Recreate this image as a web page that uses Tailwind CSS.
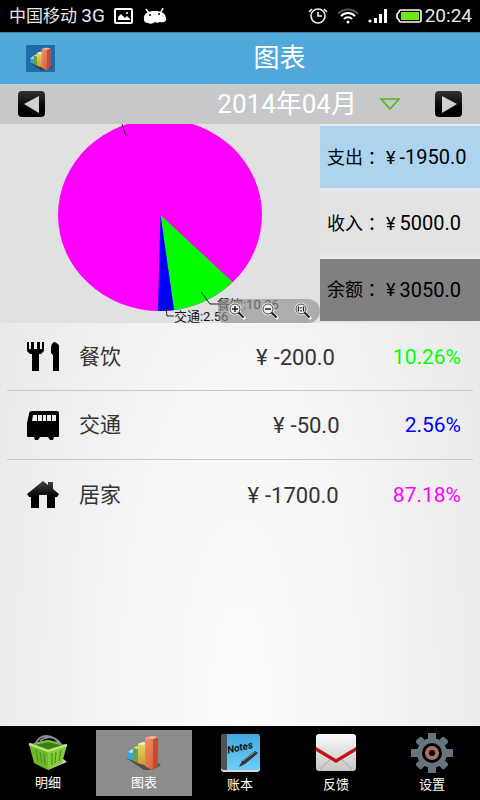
<!DOCTYPE html>
<html lang="zh-CN">
<head>
    <meta charset="UTF-8">
    <meta name="viewport" content="width=device-width, initial-scale=1.0">
    <title>图表</title>
    <script src="https://cdn.jsdelivr.net/npm/@tailwindcss/browser@4"></script>
</head>
<body class="min-h-screen flex flex-col bg-[radial-gradient(ellipse_at_50%_86%,#fdfdfd_0%,#f5f5f5_35%,#e4e4e4_100%)] font-['Roboto','Noto_Sans_CJK_SC',sans-serif]">
    <!-- Shared icons -->
    <svg class="absolute w-0 h-0">
        <linearGradient id="red" x2="1" y2="1"><stop stop-color="#f0936f"/><stop offset="1" stop-color="#d9532f"/></linearGradient>
        <linearGradient id="yellow" x2="0" y2="1"><stop stop-color="#e3df6a"/><stop offset="1" stop-color="#c79a2e"/></linearGradient>
        <symbol id="bars" viewBox="0 0 36 36">
            <path d="M0 23l18 12h8l9-5-6-4z" fill="#333" opacity=".7"/>
            <path d="M2 17l4-3 3 1v11l-7-2z" fill="#3aa6d6"/>
            <path d="M2 17l4-3 3 1-3 3z" fill="#a8e6fa"/>
            <path d="M7 13l4-2 4 1v17l-8-3z" fill="#6fa042"/>
            <path d="M7 13l4-2 4 1-4 2z" fill="#c4e29a"/>
            <path d="M12 9l5-2 4 1v23l-9-3z" fill="url(#yellow)"/>
            <path d="M12 9l5-2 4 1-4 2z" fill="#f5f2ae"/>
            <path d="M19 3l7-2 6 1v28l-6 5-7-4z" fill="url(#red)"/>
            <path d="M27 4l5-2v28l-5 5z" fill="#c64c2d"/>
            <path d="M19 3l7-2 6 1-5 2z" fill="#f6b49b"/>
        </symbol>
        <symbol id="lens" viewBox="0 0 18 18">
            <path d="M11 11l5 5" stroke="#fff" stroke-width="3" stroke-linecap="round"/>
            <circle cx="7" cy="7" r="6" fill="#f4f4f4" stroke="#eee" stroke-width="1"/>
            <circle cx="7" cy="7" r="5" fill="#f0f0f0" stroke="#444" stroke-width="1"/>
            <path d="M11 11l4 4" stroke="#222" stroke-width="2" stroke-linecap="round"/>
        </symbol>
    </svg>

    <!-- Status bar -->
    <div class="h-8 bg-black text-[#e8e8e8] flex items-center justify-between pl-[9px] pr-2">
        <div class="flex items-center gap-[9px]">
            <span class="text-[17px]">中国移动 <span class="text-[19px]">3G</span></span>
            <svg class="w-5 h-4" viewBox="0 0 20 16" fill="none">
                <rect x="1" y="1" width="17" height="14" rx="1" stroke="#fff" stroke-width="2"/>
                <path d="M4 12V9l3-3 4 4 2-2 3 3v1z" fill="#fff"/>
                <circle cx="13" cy="5" r="1" fill="#fff"/>
            </svg>
            <svg class="w-6 h-4" viewBox="0 0 24 16">
                <path d="M3 1l3 4M20 0l-2 4" stroke="#fff" stroke-width="1.500"/>
                <path d="M1 12C0 5 5 3 12 3s10 2 11 7c1 4-3 5-6 4-2 1-3 1-5 0-2 2-5 2-7 1-2 0-4-1-4-3z" fill="#fff"/>
                <circle cx="7" cy="7" r="1" fill="#000"/>
                <circle cx="16" cy="6" r="1" fill="#000"/>
            </svg>
        </div>
        <div class="flex items-center gap-2">
            <svg class="w-5 h-4" viewBox="0 0 20 16" fill="none" stroke="#f0f0f0" stroke-width="1.6">
                <circle cx="10" cy="8" r="7"/>
                <path d="M10 4v4h4M1 4l3-3M19 4l-3-3"/>
            </svg>
            <svg class="w-6 h-4" viewBox="0 0 24 16" fill="none" stroke="#fff" stroke-width="2">
                <path d="M2 5.500C8 0 16 0 22 5.500" stroke="#555"/>
                <path d="M5 8c4-4 10-4 14 0M8 11c2-2.500 6-2.500 8 0"/>
                <circle cx="12" cy="14" r="1.500" fill="#fff" stroke="none"/>
            </svg>
            <svg class="w-5 h-4" viewBox="0 0 20 16" fill="#fff">
                <circle cx="2" cy="13" r="1.600"/>
                <path d="M6 10h3v5H6zM11 6h3v9h-3zM16 1h3v14h-3z"/>
            </svg>
            <div class="flex items-center gap-[3px]">
                <svg class="w-[26px] h-4" viewBox="0 0 26 16">
                    <path d="M5 2h18q2 0 2 2v8q0 2-2 2H5q-2 0-2-2l-2-2V6l2-2q0-2 2-2z" fill="none" stroke="#fff" stroke-width="1.600"/>
                    <rect x="5" y="4" width="18" height="8" fill="#6fe51a"/>
                </svg>
                <span class="text-[19px]">20:24</span>
            </div>
        </div>
    </div>

    <!-- Header -->
    <header class="h-[52px] bg-[#50a9da] border-t border-[#3f84aa] flex items-center px-[26px]">
        <div class="w-[29px] h-[27px] bg-[#1f6cab] flex items-center justify-center">
            <svg class="w-6 h-6"><use href="#bars"/></svg>
        </div>
        <h1 class="flex-1 text-center text-[26px] pl-20 pr-[30px] text-white">图表</h1>
    </header>

    <!-- Month switcher -->
    <div class="h-10 bg-[#c7c8ca] flex items-center px-[18px]">
        <button aria-label="上个月" class="w-[27px] h-[26px] rounded-sm bg-linear-to-b from-[#333] to-black flex items-center justify-center">
            <svg class="w-5 h-5" viewBox="0 0 20 20"><path d="M2 10l15-8v17z" fill="#d0d0d0"/></svg>
        </button>
        <button class="ml-auto flex items-center gap-[22px] text-[26px] text-white">
            2014年04月
            <svg class="w-[22px] h-3" viewBox="0 0 22 12"><path d="M2 1h18L11 11z" fill="none" stroke="#55b81c" stroke-width="1.600"/></svg>
        </button>
        <button aria-label="下个月" class="ml-[34px] w-[27px] h-[26px] rounded-sm bg-linear-to-b from-[#333] to-black flex items-center justify-center">
            <svg class="w-5 h-5" viewBox="0 0 20 20"><path d="M18 10L3 2v17z" fill="#d0d0d0"/></svg>
        </button>
    </div>

    <!-- Chart and totals -->
    <section class="flex">
        <div class="relative w-2/3 bg-[#e1e1e1]">
            <svg class="w-full" viewBox="0 0 320 199">
                <ellipse cx="160" cy="91" rx="102" ry="96" fill="#f0f"/>
                <path d="M160.500 91L232.500 158A102 96 0 0 1 174 186z" fill="#0f0"/>
                <path d="M160.500 91L174 186A102 96 0 0 1 158 187z" fill="#00f"/>
                <path d="M122 0l4 12M201 168l9 12h8M165 177l2 15h7" fill="none" stroke="#222"/>
                <text x="217" y="185" font-size="13" fill="#111">餐饮:10.26</text>
                <text x="174" y="197" font-size="13" fill="#111">交通:2.56</text>
            </svg>
            <div class="absolute right-0 bottom-0 h-6 w-[102px] pl-[2px] rounded-r-xl rounded-l-md bg-[#909090]/65 flex items-center justify-around">
                <button aria-label="放大">
                    <svg class="w-[18px] h-[18px]" viewBox="0 0 18 18"><use href="#lens"/><path d="M4 7h6M7 4v6" stroke="#222" stroke-width="1.500"/></svg>
                </button>
                <button aria-label="缩小">
                    <svg class="w-[18px] h-[18px]" viewBox="0 0 18 18"><use href="#lens"/><path d="M4 7h6" stroke="#222" stroke-width="1.500"/></svg>
                </button>
                <button aria-label="原始大小">
                    <svg class="w-[18px] h-[18px]" viewBox="0 0 18 18"><use href="#lens"/><path d="M4.500 4.500v5M9.500 4.500v5M7 5v1.500M7 8v1.500" stroke="#222" stroke-width="1.300"/></svg>
                </button>
            </div>
        </div>
        <div class="w-1/3 flex flex-col gap-1 py-[2px] bg-[#e8e8e8] text-[18px] text-black whitespace-nowrap">
            <div class="flex-1 flex items-center pl-[7px] bg-[#add4ef]">支出<span class="font-['Noto_Sans_CJK_TC']">：</span><span class="ml-[5px] mr-1">¥</span><span class="text-[20px]">-1950.0</span></div>
            <div class="flex-1 flex items-center pl-[7px] bg-[#e3e3e3]">收入<span class="font-['Noto_Sans_CJK_TC']">：</span><span class="ml-[5px] mr-1">¥</span><span class="text-[20px]">5000.0</span></div>
            <div class="flex-1 flex items-center pl-[7px] bg-[#808080]">余额<span class="font-['Noto_Sans_CJK_TC']">：</span><span class="ml-[5px] mr-1">¥</span><span class="text-[20px]">3050.0</span></div>
        </div>
    </section>

    <!-- Categories -->
    <ul class="flex-1 px-[7px] text-[21px] text-[#333]">
        <li class="h-[68px] pt-[2px] flex items-center pl-5 pr-3 border-b border-[#c8c8c8]">
            <svg class="w-8 h-8 mr-5" viewBox="0 0 32 32">
                <path d="M0 1h2v7h2V1h3v7h3V1h3v7h2V1h2v9l-3 3h-2v17H5V13H3l-3-3zM24 8c0-5 2-7 4-7l4 3v26h-6V14l-2-2z" fill="#000"/>
            </svg>
            <span>餐饮</span>
            <span class="flex-[7]"></span>
            <span class="text-[22px]"><span class="mr-[6px]">¥</span>-200.0</span>
            <span class="flex-[3]"></span>
            <span class="text-[#0f0]">10.26%</span>
        </li>
        <li class="h-[69px] pt-[2px] flex items-center pl-5 pr-3 border-b border-[#c8c8c8]">
            <svg class="w-8 h-8 mr-5" viewBox="0 0 32 32">
                <path d="M5 1h25q2 0 2 2v23q0 1-1 1h-4l-1 3h-3l-2-3H13l-2 3H8l-1-3H1q-1 0-1-1V13L2 4q0-3 3-3z" fill="#000"/>
                <path d="M6 5h4v6H5zM11 5h4v6h-4zM16 5h3v6h-3zM20 5h4v6h-4zM25 5h4v6h-4z" fill="#eee"/>
            </svg>
            <span>交通</span>
            <span class="flex-[7]"></span>
            <span class="text-[22px]"><span class="mr-[6px]">¥</span>-50.0</span>
            <span class="flex-[3]"></span>
            <span class="text-[#00f]">2.56%</span>
        </li>
        <li class="h-[69px] pt-[2px] flex items-center pl-5 pr-3">
            <svg class="w-8 h-8 mr-5" viewBox="0 0 32 32">
                <defs><linearGradient id="roof" x2="0" y2="1"><stop stop-color="#444"/><stop offset=".6" stop-color="#000"/></linearGradient></defs>
                <path d="M0 15L16 2l5 4V3h5v7l6 5-2 3h-2v11h-8V16h-8v13H4V18H2z" fill="url(#roof)"/>
            </svg>
            <span>居家</span>
            <span class="flex-[7]"></span>
            <span class="text-[22px]"><span class="mr-[6px]">¥</span>-1700.0</span>
            <span class="flex-[3]"></span>
            <span class="text-[#f0f]">87.18%</span>
        </li>
    </ul>

    <!-- Bottom tabs -->
    <nav class="h-[74px] bg-black grid grid-cols-5 py-1 text-[13px] leading-4 text-white">
        <a href="#" class="flex flex-col items-center justify-center gap-1">
            <svg class="w-10 h-9" viewBox="0 0 40 36">
                <path d="M20 35l19-8-5-4z" fill="#ccc"/>
                <path d="M1 9L20 5l19 5-19 6z" fill="#3f7d14"/>
                <path d="M6 9l14-3 13 3" fill="none" stroke="#7cc536" stroke-width="2"/>
                <path d="M1 9l19 7v19L6 28z" fill="#6dbb26"/>
                <path d="M39 10l-19 6v19l14-7z" fill="#84cc3a"/>
                <path d="M8 15l2 11M12 17l2 11M16 18l1 12M24 18v12M28 17l-1 11M33 15l-2 11" stroke="#4c921a" stroke-width="1.200"/>
                <path d="M1 9l19 7 19-6" fill="none" stroke="#b2e877" stroke-width="2.500"/>
                <path d="M7 10Q10 1 19 1q9 1 12 8M12 6Q18 1 26 3q6 3 7 7" fill="none" stroke="#8c9197" stroke-width="1.800"/>
            </svg>
            明细
        </a>
        <a href="#" class="flex flex-col items-center justify-center gap-1 bg-[#8c8c8c]">
            <svg class="w-9 h-9"><use href="#bars"/></svg>
            图表
        </a>
        <a href="#" class="flex flex-col items-center justify-center gap-1">
            <svg class="w-10 h-10" viewBox="0 0 40 40">
                <defs><linearGradient id="cover" x2="0" y2="1"><stop stop-color="#45a8e0"/><stop offset="1" stop-color="#6ccdf8"/></linearGradient></defs>
                <rect x="1" y="2" width="39" height="37" rx="3" fill="#d8d8d8"/>
                <rect x="1" y="1" width="39" height="36" rx="3" fill="url(#cover)"/>
                <path d="M4 1h3v36H4q-3 0-3-3V4q0-3 3-3z" fill="#4b555c"/>
                <text x="8" y="20" font-size="10" font-style="italic" font-weight="700" fill="#111" transform="rotate(-12 10 20)">Notes</text>
                <path d="M19 34l3-6 13-10 3 2-13 11z" fill="#333"/>
                <path d="M23 28l12-9" stroke="#888"/>
            </svg>
            账本
        </a>
        <a href="#" class="flex flex-col items-center justify-center gap-1">
            <svg class="w-10 h-10" viewBox="0 0 40 40">
                <defs><linearGradient id="paper" x2="0" y2="1"><stop stop-color="#fafafa"/><stop offset="1" stop-color="#c6c6c6"/></linearGradient></defs>
                <rect x="0" y="1" width="40" height="37" rx="3" fill="url(#paper)"/>
                <path d="M4 36l12-11M36 36L24 25" stroke="#aaa"/>
                <path d="M0 14l20 12 20-12v4L20 30 0 18z" fill="#c2121b"/>
            </svg>
            反馈
        </a>
        <a href="#" class="flex flex-col items-center justify-center gap-1">
            <svg class="w-[42px] h-10" viewBox="-21 -20 42 40">
                <g fill="#65747f">
                    <rect x="-4" y="-20" width="8" height="40"/>
                    <rect x="-21" y="-4" width="42" height="8"/>
                    <rect x="-4" y="-20" width="8" height="40" rx="2" transform="rotate(45)"/>
                    <rect x="-4" y="-20" width="8" height="40" rx="2" transform="rotate(-45)"/>
                    <circle r="15"/>
                </g>
                <circle r="10" fill="#000"/>
                <circle r="5" fill="none" stroke="#a57464" stroke-width="4"/>
            </svg>
            设置
        </a>
    </nav>
</body>
</html>
